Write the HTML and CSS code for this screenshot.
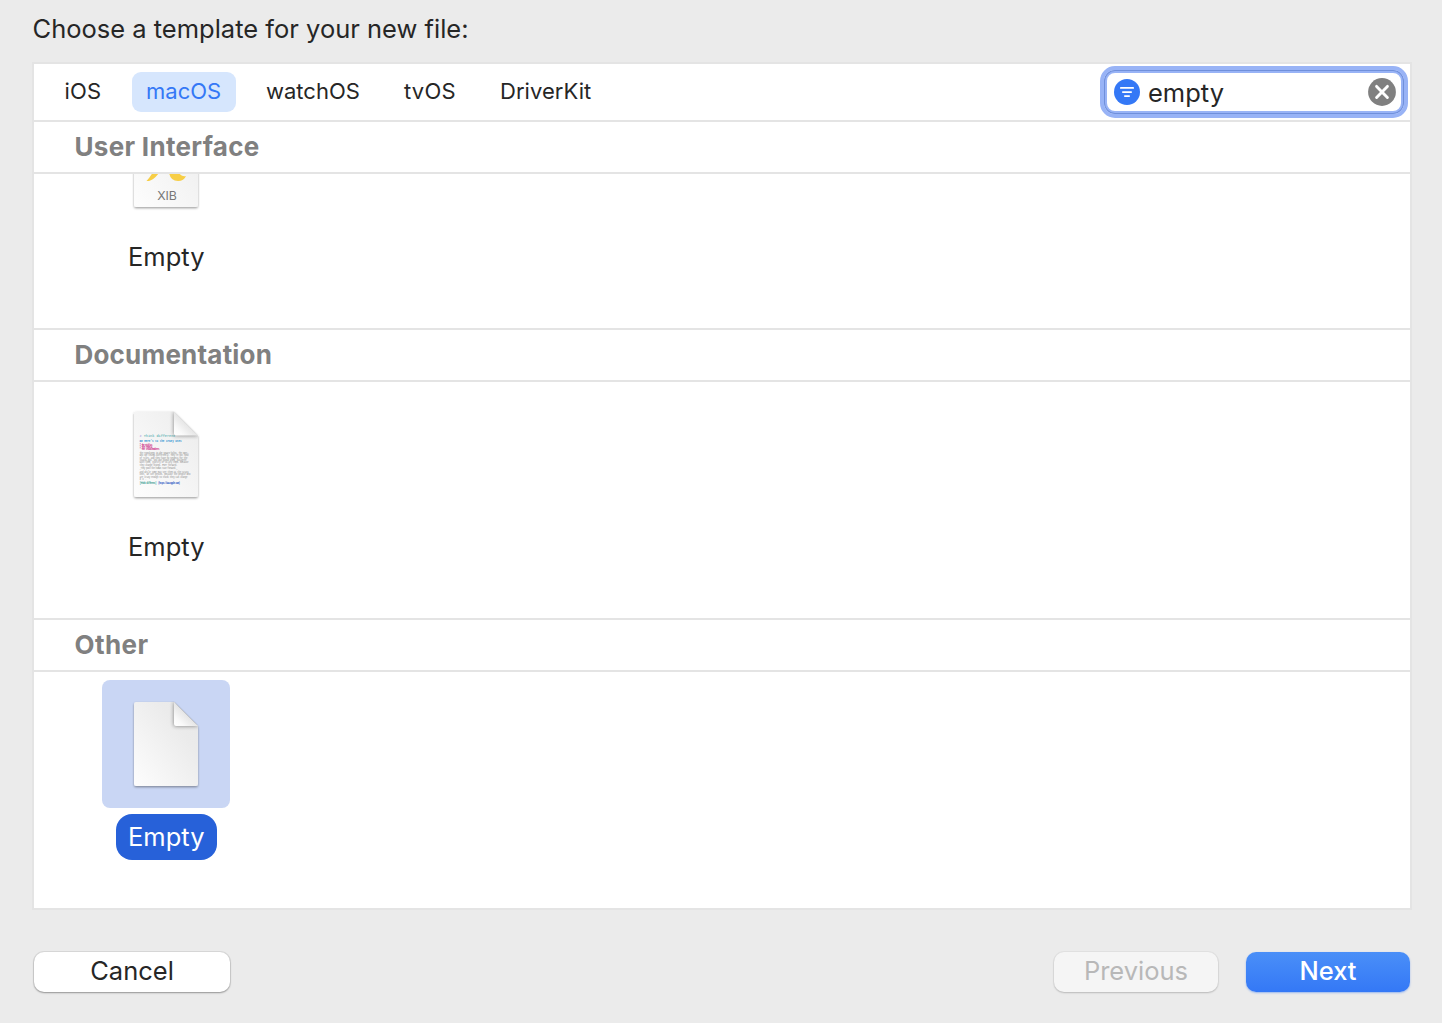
FILE: index.html
```html
<!DOCTYPE html>
<html lang="en">
<head>
<meta charset="utf-8">
<title>New File</title>
<link rel="stylesheet" href="styles.css">
</head>
<body>
<main class="dialog">
  <h1 class="title">Choose a template for your new file:</h1>

  <section class="panel">
    <header class="toolbar">
      <nav class="tabs">
        <a class="tab"><span class="t-ios">iOS</span></a>
        <a class="tab tab-active"><span class="t-macos">macOS</span></a>
        <a class="tab"><span class="t-watchos">watchOS</span></a>
        <a class="tab"><span class="t-tvos">tvOS</span></a>
        <a class="tab"><span class="t-driverkit">DriverKit</span></a>
      </nav>
      <div class="search">
        <svg class="filter-icon" viewBox="0 0 26 26" width="26" height="26">
          <circle cx="13" cy="13" r="13" fill="#3478f6"/>
          <path d="M6.900 8.900H19.100M8.900 13.100H17.100M10.900 17.100H15.100" stroke="#fff" stroke-width="1.900" stroke-linecap="round"/>
        </svg>
        <span class="query">empty</span>
        <svg class="clear-icon" viewBox="0 0 28 28" width="28" height="28">
          <circle cx="14" cy="14" r="13.900" fill="#808080"/>
          <path d="M8.600 8.400L19.400 19.400M19.400 8.400L8.600 19.400" stroke="#fff" stroke-width="2.900" stroke-linecap="round"/>
        </svg>
      </div>
    </header>

    <h2 class="group-title g-ui">User Interface</h2>
    <div class="group group-scrolled">
      <div class="template">
        <div class="thumb">
          <svg viewBox="0 0 128 128" width="128" height="128">
            <defs>
              <linearGradient id="page" x1="0" y1="1" x2="1" y2="0">
                <stop offset="0" stop-color="#fdfdfd"/>
                <stop offset=".7" stop-color="#ebebeb"/>
                <stop offset="1" stop-color="#e8e8e8"/>
              </linearGradient>
              <linearGradient id="paper" x1="0" y1="1" x2="1" y2="0">
                <stop offset="0" stop-color="#fdfdfd"/>
                <stop offset="1" stop-color="#ececec"/>
              </linearGradient>
              <linearGradient id="fold" x1="0" y1="1" x2=".55" y2=".45">
                <stop offset="0" stop-color="#fff"/>
                <stop offset=".35" stop-color="#fafafa"/>
                <stop offset="1" stop-color="#e2e2e2"/>
              </linearGradient>
              <filter id="lift" x="-20%" y="-20%" width="140%" height="140%">
                <feDropShadow dx="0" dy="1.200" stdDeviation=".9" flood-color="#000" flood-opacity=".38"/>
              </filter>
              <filter id="soft" x="-60%" y="-60%" width="220%" height="220%">
                <feGaussianBlur stdDeviation="2"/>
              </filter>
              <clipPath id="sheet"><path d="M34 21.500H72L96 45.500V104Q96 106 94 106H34Q32 106 32 104V23.500Q32 21.500 34 21.500Z"/></clipPath>
            </defs>
            <path d="M34 21H72L96 45V105Q96 107 94 107H34Q32 107 32 105V23Q32 21 34 21Z" fill="url(#paper)" filter="url(#lift)"/>
            <path d="M44.500 81Q50 75 53 68H60Q54 79 47 81Z" fill="#f7ce46"/>
            <path d="M67 72Q68 81 76 81Q82 81 84 76Q80 77.500 76 72Z" fill="#f7ce46"/>
            <text x="65" y="99.800" class="badge">XIB</text>
          </svg>
        </div>
        <span class="label">Empty</span>
      </div>
    </div>

    <h2 class="group-title g-doc">Documentation</h2>
    <div class="group">
      <div class="template">
        <div class="thumb">
          <svg viewBox="0 0 128 128" width="128" height="128">
            <path d="M34 21.500H72L96 45.500V105Q96 107 94 107H34Q32 107 32 105V23.500Q32 21.500 34 21.500Z" fill="url(#paper)" filter="url(#lift)"/>
            <g class="markdown">
              <text x="37.500" y="47" textLength="36" class="md-head"><tspan fill="#6b46c8">#</tspan> Think different</text>
              <text x="37.500" y="51.500" textLength="42" class="md-sub">## Here's to the crazy ones</text>
              <text x="37.500" y="55.600" textLength="13" class="md-list">* The misfits</text>
              <text x="37.500" y="57.800" textLength="13" class="md-list">* The rebels</text>
              <text x="37.500" y="60" textLength="20" class="md-list">* The troublemakers</text>
              <g class="md-body">
                <text x="37.500" y="64" textLength="48">The round pegs in the square holes. The ones</text>
                <text x="37.500" y="66.300" textLength="49">who see things differently. They're not fond</text>
                <text x="37.500" y="68.600" textLength="48">of rules. And they have no respect for the</text>
                <text x="37.500" y="70.900" textLength="47">status quo. You can quote them, disagree</text>
                <text x="37.500" y="73.200" textLength="49">with them, glorify or vilify them. Because</text>
                <text x="37.500" y="75.500" textLength="38">they change things. Ever forward.</text>
                <text x="37.500" y="79.200" textLength="38">_They push the human race forward._</text>
                <text x="37.500" y="83" textLength="49">And while some may see them as the crazy</text>
                <text x="37.500" y="85.300" textLength="51">ones, we see genius. Because the people who</text>
                <text x="37.500" y="87.600" textLength="48">are crazy enough to think they can change</text>
                <text x="37.500" y="89.900" textLength="7">do.</text>
              </g>
              <text x="37.500" y="93.500" textLength="17" class="md-link">[Think different]</text>
              <text x="56" y="93.500" textLength="22" class="md-url">(https://www.apple.com)</text>
            </g>
            <g clip-path="url(#sheet)"><path d="M72 21V45.500H97Z" fill="#000" opacity=".48" filter="url(#soft)"/></g>
            <path d="M72 21.500L96 45.500H74Q72 45.500 72 43.500Z" fill="url(#fold)"/>
          </svg>
        </div>
        <span class="label">Empty</span>
      </div>
    </div>

    <h2 class="group-title g-other">Other</h2>
    <div class="group">
      <div class="template template-selected">
        <div class="thumb">
          <svg viewBox="0 0 128 128" width="128" height="128">
            <path d="M34 22H72L96 46V104Q96 106 94 106H34Q32 106 32 104V24Q32 22 34 22Z" fill="url(#page)" filter="url(#lift)"/>
            <g clip-path="url(#sheet)"><path d="M72 21V46H97Z" fill="#000" opacity=".48" filter="url(#soft)"/></g>
            <path d="M72 22L96 46H74Q72 46 72 44Z" fill="url(#fold)"/>
          </svg>
        </div>
        <span class="label">Empty</span>
      </div>
    </div>
  </section>

  <footer class="actions">
    <button class="btn btn-cancel">Cancel</button>
    <button class="btn btn-previous" disabled>Previous</button>
    <button class="btn btn-next">Next</button>
  </footer>
</main>
</body>
</html>
```
FILE: styles.css
```css
* { box-sizing: border-box; }

body {
  margin: 0;
  background: #ebebeb;
  color: #262626;
  font-family: Inter, "Liberation Sans", sans-serif;
}

.dialog {
  display: flex;
  flex-direction: column;
  width: 1442px;
  height: 1023px;
  padding: 0 30px 0 32px;
  overflow: hidden;
}

.title {
  margin: 0;
  height: 62px;
  padding: 13px 0 0 .5px;
  font-size: 25.5px;
  line-height: 32px;
  font-weight: 400;
  white-space: nowrap;
}

.panel {
  display: flex;
  flex-direction: column;
  height: 848px;
  border: 2px solid #e4e4e4;
  background: #fff;
}

.toolbar {
  display: flex;
  justify-content: space-between;
  height: 58px;
  padding: 0 2px 0 16px;
  border-bottom: 2px solid #e4e4e4;
}

.tabs { display: flex; padding-top: 8px; gap: 16px; }

.tab {
  height: 40px;
  padding: 0 14px;
  border-radius: 9px;
  font-size: 22px;
  line-height: 39px;
  white-space: nowrap;
}

.tab span { display: block; }
.t-ios { width: 38px; padding-left: .5px; letter-spacing: .2px; }
.t-macos { width: 76px; }
.t-watchos { width: 94px; }
.t-tvos { width: 52px; letter-spacing: .2px; }
.t-driverkit { width: 92px; letter-spacing: .05px; }

.tab-active { background: #d6e6fd; color: #3478f6; }

.search {
  display: flex;
  align-items: center;
  width: 308px;
  height: 52px;
  margin-top: 2px;
  padding: 0 8px 0 10px;
  border: 4px solid #98b3f6;
  border-radius: 15px;
  background: #fff;
  box-shadow: inset 0 0 0 1px #7090db, inset 0 0 0 3px #98b3f6;
}

.filter-icon, .clear-icon { flex: none; }
.query { flex: 1; padding: 2px 0 0 8px; font-size: 25.5px; line-height: 32px; }

.group-title {
  flex: none;
  margin: 0;
  height: 52px;
  padding-left: 40.500px;
  border-bottom: 2px solid #e4e4e4;
  color: #808080;
  font-size: 26px;
  font-weight: 700;
  line-height: 50px;
}

.g-ui { letter-spacing: .3px; }
.g-doc { letter-spacing: .2px; }
.g-other { letter-spacing: .4px; }

.group {
  display: flex;
  height: 238px;
  flex: none;
  align-items: flex-end;
  padding: 0 68px 48px;
  border-bottom: 2px solid #e4e4e4;
  overflow: hidden;
}

.group-scrolled { height: 156px; }
.group:last-child { height: 236px; border-bottom: 0; }

.template {
  display: flex;
  flex-direction: column;
  align-items: center;
  gap: 6px;
  width: 128px;
}

.thumb { width: 128px; height: 128px; border-radius: 8px; }
.thumb svg { display: block; }

.label {
  width: 101px;
  height: 46px;
  padding-left: .5px;
  border-radius: 16px;
  font-size: 25.5px;
  line-height: 45px;
  text-align: center;
}

.template-selected .thumb { background: #c9d6f4; }
.template-selected .label { background: #2761d9; color: #fff; }

.badge { fill: #777; font-size: 12.3px; text-anchor: middle; }

.markdown { font-family: "Liberation Mono", monospace; font-size: 2.6px; }
.md-head { font-size: 3.6px; fill: #35a3a5; }
.md-sub { font-weight: 700; fill: #2b8fd0; }
.md-list { font-weight: 700; fill: #d0408f; }
.md-body { fill: #9a9a9a; }
.md-link { font-weight: 700; fill: #4ba69a; }
.md-url { font-weight: 700; fill: #3e68c8; }

.actions { display: flex; padding: 42px 0 0 2px; }

.btn {
  height: 40px;
  padding: 0 0 2px;
  border: 0;
  border-radius: 10px;
  font: 400 25.5px/36px Inter, "Liberation Sans", sans-serif;
  text-align: center;
}

.btn-cancel {
  width: 196px;
  margin-right: auto;
  background: #fff;
  color: #262626;
  box-shadow: 0 0 0 1px rgba(0, 0, 0, .07), 0 1px 2px rgba(0, 0, 0, .32);
}

.btn-previous {
  width: 164px;
  margin-right: 28px;
  background: #f5f5f5;
  color: #b8b8b8;
  box-shadow: 0 0 0 1px rgba(0, 0, 0, .035), 0 1px 2px rgba(0, 0, 0, .18);
}

.btn-next {
  width: 164px;
  margin-right: 2px;
  background: linear-gradient(#4a8ff8, #3478f6);
  color: #fff;
  font-weight: 500;
  box-shadow: 0 1px 2px rgba(52, 120, 246, .45);
}
```
